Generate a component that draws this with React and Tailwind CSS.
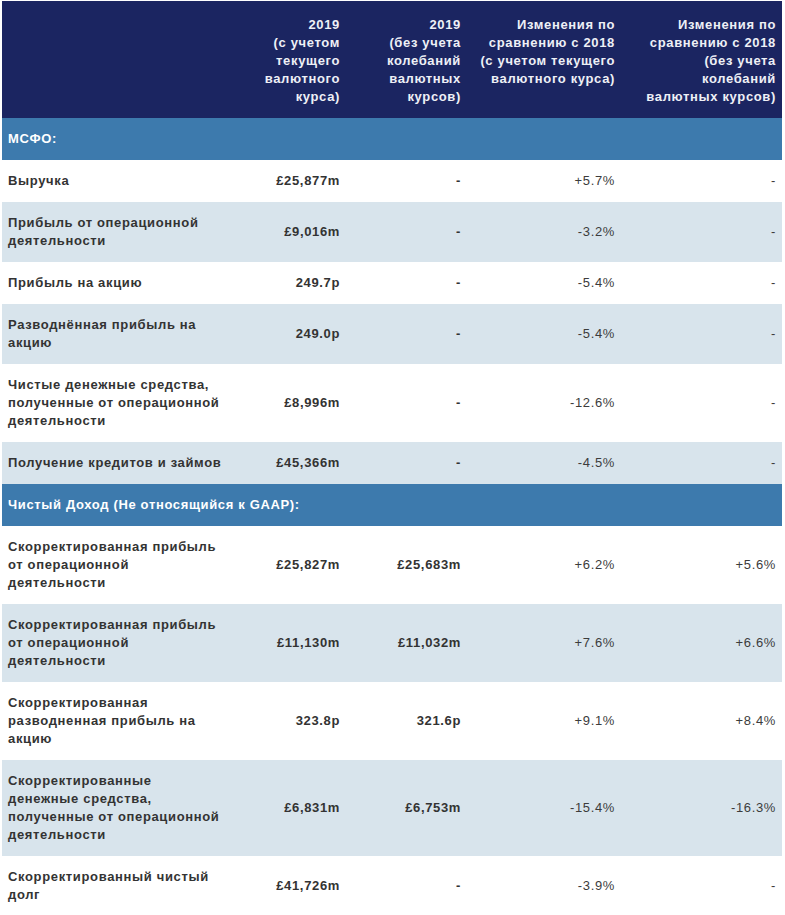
import React from 'react';

const rows = [
  { section: 'МСФО:' },
  { label: 'Выручка', a: '£25,877m', b: '-', c: '+5.7%', d: '-' },
  { label: 'Прибыль от операционной деятельности', a: '£9,016m', b: '-', c: '-3.2%', d: '-' },
  { label: 'Прибыль на акцию', a: '249.7p', b: '-', c: '-5.4%', d: '-' },
  { label: 'Разводнённая прибыль на акцию', a: '249.0p', b: '-', c: '-5.4%', d: '-' },
  { label: 'Чистые денежные средства, полученные от операционной деятельности', a: '£8,996m', b: '-', c: '-12.6%', d: '-' },
  { label: 'Получение кредитов и займов', a: '£45,366m', b: '-', c: '-4.5%', d: '-' },
  { section: 'Чистый Доход (Не относящийся к GAAP):' },
  { label: 'Скорректированная прибыль от операционной деятельности', a: '£25,827m', b: '£25,683m', c: '+6.2%', d: '+5.6%' },
  { label: 'Скорректированная прибыль от операционной деятельности', a: '£11,130m', b: '£11,032m', c: '+7.6%', d: '+6.6%' },
  { label: 'Скорректированная разводненная прибыль на акцию', a: '323.8p', b: '321.6p', c: '+9.1%', d: '+8.4%' },
  { label: 'Скорректированные денежные средства, полученные от операционной деятельности', a: '£6,831m', b: '£6,753m', c: '-15.4%', d: '-16.3%' },
  { label: 'Скорректированный чистый долг', a: '£41,726m', b: '-', c: '-3.9%', d: '-' },
];

export default function App() {
  let stripe = 0;
  return (
    <div className="bg-white pt-px pl-[2px] font-['Liberation_Sans',Arial,sans-serif] text-[13px] leading-[18px] tracking-[0.65px]">
      <table className="w-[780px] table-fixed border-collapse">
        <colgroup>
          <col className="w-[230px]" />
          <col className="w-[114px]" />
          <col className="w-[121px]" />
          <col className="w-[154px]" />
          <col className="w-[161px]" />
        </colgroup>
        <thead>
          <tr className="bg-[#1b2561] text-[#eef0f6] font-bold align-top">
            <th className="px-[6px] pt-[15px] pb-3" />
            <th className="px-[6px] pt-[15px] pb-3 text-right">2019<br />(с учетом текущего валютного курса)</th>
            <th className="px-[6px] pt-[15px] pb-3 text-right">2019<br />(без учета колебаний валютных курсов)</th>
            <th className="px-[6px] pt-[15px] pb-3 text-right">Изменения по сравнению с 2018 (с учетом текущего валютного курса)</th>
            <th className="px-[6px] pt-[15px] pb-3 text-right">Изменения по сравнению с 2018 (без учета колебаний валютных курсов)</th>
          </tr>
        </thead>
        <tbody>
          {rows.map((r, i) => {
            if (r.section) {
              stripe = 0;
              return (
                <tr key={i} className="bg-[#3d7aad]">
                  <td colSpan={5} className="px-[6px] py-3 font-bold text-white">{r.section}</td>
                </tr>
              );
            }
            const bg = stripe % 2 === 0 ? 'bg-white' : 'bg-[#d8e4ec]';
            stripe += 1;
            return (
              <tr key={i} className={bg + ' align-middle text-[#333333]'}>
                <td className="px-[6px] py-3 font-bold">{r.label}</td>
                <td className="px-[6px] py-3 text-right font-bold">{r.a}</td>
                <td className="px-[6px] py-3 text-right font-bold">{r.b}</td>
                <td className="px-[6px] py-3 text-right text-[#3c3c3c]">{r.c}</td>
                <td className="px-[6px] py-3 text-right text-[#3c3c3c]">{r.d}</td>
              </tr>
            );
          })}
        </tbody>
      </table>
    </div>
  );
}
